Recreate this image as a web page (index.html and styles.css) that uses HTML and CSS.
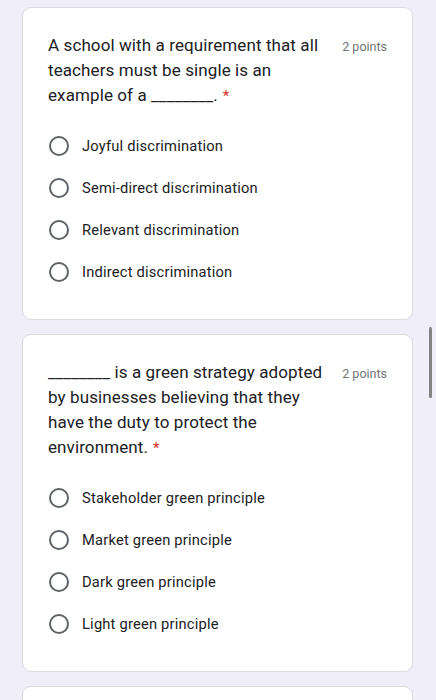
FILE: index.html
```html
<!DOCTYPE html>
<html>
<head>
<meta charset="utf-8">
<link rel="stylesheet" href="styles.css">
</head>
<body>
<div class="page">
  <section class="card">
    <div class="q-head">
      <div class="q-title">A school with a requirement that all teachers must be single is an example of a ________.<span class="req">*</span></div>
      <div class="points">2 points</div>
    </div>
    <div class="options">
      <label class="opt"><span class="radio"></span><span class="opt-text">Joyful discrimination</span></label>
      <label class="opt"><span class="radio"></span><span class="opt-text">Semi-direct discrimination</span></label>
      <label class="opt"><span class="radio"></span><span class="opt-text">Relevant discrimination</span></label>
      <label class="opt"><span class="radio"></span><span class="opt-text">Indirect discrimination</span></label>
    </div>
  </section>
  <section class="card">
    <div class="q-head">
      <div class="q-title">________ is a green strategy adopted by businesses believing that they have the duty to protect the environment.<span class="req">*</span></div>
      <div class="points">2 points</div>
    </div>
    <div class="options">
      <label class="opt"><span class="radio"></span><span class="opt-text">Stakeholder green principle</span></label>
      <label class="opt"><span class="radio"></span><span class="opt-text">Market green principle</span></label>
      <label class="opt"><span class="radio"></span><span class="opt-text">Dark green principle</span></label>
      <label class="opt"><span class="radio"></span><span class="opt-text">Light green principle</span></label>
    </div>
  </section>
  <section class="card card-stub"></section>
</div>
<div class="scrollbar"></div>
</body>
</html>
```
FILE: styles.css
```css
html, body {
  margin: 0;
  padding: 0;
  background: #f0eef9;
  height: 700px;
  overflow: hidden;
}
body {
  font-family: Roboto, "Liberation Sans", sans-serif;
  color: #202124;
}
.page {
  padding: 7px 23px 0 22px;
  display: flex;
  flex-direction: column;
  gap: 14px;
}
.card {
  background: #fff;
  border: 1px solid #dadce0;
  border-radius: 9px;
  padding: 25px 25px 26px 25px;
}
.card-stub {
  height: 40px;
}
.q-head {
  display: flex;
  align-items: flex-start;
  gap: 12px;
}
.q-title {
  flex: 1;
  font-size: 17px;
  line-height: 25px;
  letter-spacing: 0.1px;
  max-width: 282px;
}
.req {
  color: #d93025;
  font-size: 15px;
  line-height: 1;
  margin-left: 5px;
}
.points {
  margin-left: auto;
  font-size: 12.5px;
  line-height: 25px;
  padding-top: 1px;
  color: #70757a;
  white-space: nowrap;
}
.options {
  margin-top: 17px;
  display: flex;
  flex-direction: column;
}
.opt {
  display: flex;
  align-items: center;
  height: 42px;
}
.radio {
  width: 16px;
  height: 16px;
  border: 2px solid #5f6368;
  border-radius: 50%;
  margin-left: 1px;
  margin-right: 13px;
  flex: none;
}
.opt-text {
  font-size: 14.7px;
  letter-spacing: 0.2px;
}
.scrollbar {
  position: fixed;
  left: 429px;
  top: 327px;
  width: 3px;
  height: 71px;
  background: #838383;
  border-radius: 2px;
}
```
